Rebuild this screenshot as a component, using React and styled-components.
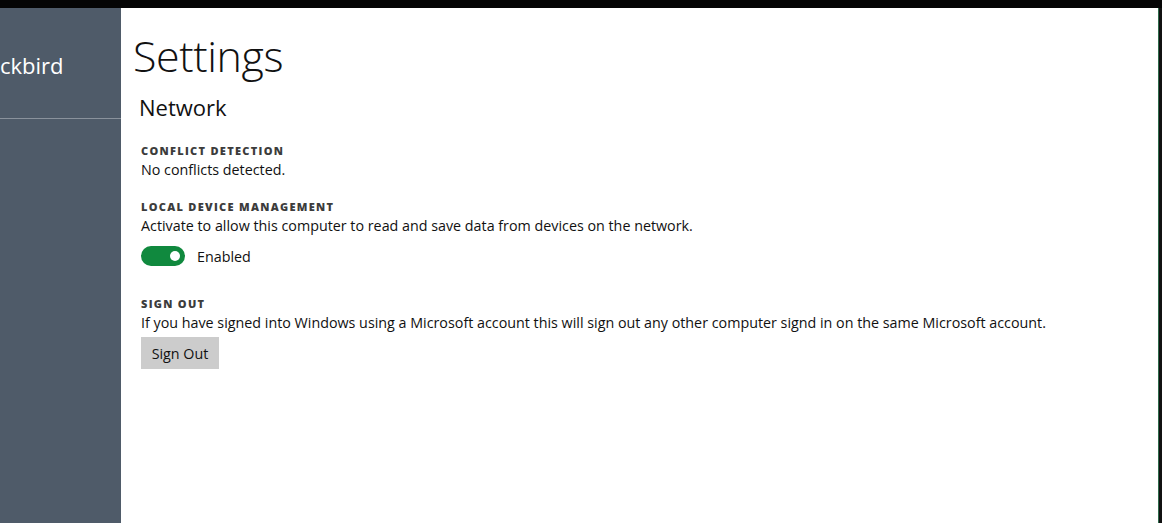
import React from 'react'
import styled, { createGlobalStyle } from 'styled-components'

const GlobalStyle = createGlobalStyle`
  html, body {
    margin: 0;
    padding: 0;
    background: #0a0a0a;
  }
  body {
    font-family: "Open Sans", "Noto Sans", sans-serif;
    color: #111;
  }
`

const Frame = styled.div`
  display: flex;
  flex-direction: column;
  width: 1162px;
  height: 523px;
  overflow: hidden;
`

const TopBar = styled.div`
  height: 8px;
  background: #050505;
`

const Body = styled.div`
  flex: 1;
  display: flex;
`

const Sidebar = styled.aside`
  flex: 0 0 121px;
  background: #4f5b69;
  display: flex;
  flex-direction: column;
`

const AppName = styled.div`
  height: 111px;
  box-sizing: border-box;
  padding-top: 42px;
  font-size: 22px;
  line-height: 30px;
  color: #fff;
  white-space: nowrap;
  border-bottom: 1px solid #8a929c;
`

const Main = styled.main`
  flex: 1;
  background: #fff;
  padding: 22px 0 0 12px;
`

const Edge = styled.div`
  flex: 0 0 3px;
  background: #111;
  border-left: 1px solid #2f6b4c;
`

const Title = styled.h1`
  margin: 0;
  font-weight: 300;
  font-size: 43px;
  line-height: 52px;
  letter-spacing: -0.4px;
`

const Subtitle = styled.h2`
  margin: 10px 0 0 6px;
  font-weight: 400;
  font-size: 22px;
  line-height: 30px;
`

const Sections = styled.div`
  margin: 20px 0 0 8px;
  display: flex;
  flex-direction: column;
  gap: 17px;
`

const Section = styled.section`
  display: flex;
  flex-direction: column;
  margin-top: ${({ $extra }) => $extra || 0}px;
`

const Label = styled.h3`
  margin: 0;
  font-size: 11px;
  line-height: 17px;
  font-weight: 800;
  letter-spacing: 1.3px;
  text-transform: uppercase;
  color: #3c3c3c;
`

const Text = styled.p`
  margin: 0;
  font-size: 14.3px;
  line-height: 22px;
  white-space: nowrap;
`

const ToggleRow = styled.label`
  display: flex;
  align-items: center;
  gap: 12px;
  margin-top: 9px;
  font-size: 14.3px;
`

const Track = styled.span`
  width: 44px;
  height: 20px;
  border-radius: 10px;
  background: #10893e;
  display: flex;
  align-items: center;
  justify-content: ${({ $on }) => ($on ? 'flex-end' : 'flex-start')};
  padding: 0 5px;
  box-sizing: border-box;
`

const Knob = styled.span`
  width: 10px;
  height: 10px;
  border-radius: 50%;
  background: #fff;
`

const Button = styled.button`
  align-self: flex-start;
  margin-top: 3px;
  width: 78px;
  height: 32px;
  border: none;
  background: #cccccc;
  font-family: inherit;
  font-size: 14.3px;
  color: #111;
  padding: 0;
`

const App = () => (
  <>
    <GlobalStyle />
    <Frame>
      <TopBar />
      <Body>
        <Sidebar>
          <AppName>ckbird</AppName>
        </Sidebar>
        <Main>
          <Title>Settings</Title>
          <Subtitle>Network</Subtitle>
          <Sections>
            <Section>
              <Label>Conflict Detection</Label>
              <Text>No conflicts detected.</Text>
            </Section>
            <Section>
              <Label>Local Device Management</Label>
              <Text>Activate to allow this computer to read and save data from devices on the network.</Text>
              <ToggleRow>
                <Track $on>
                  <Knob />
                </Track>
                Enabled
              </ToggleRow>
            </Section>
            <Section $extra={12}>
              <Label>Sign Out</Label>
              <Text>
                If you have signed into Windows using a Microsoft account this will sign out any other computer signd in on the same Microsoft account.
              </Text>
              <Button>Sign Out</Button>
            </Section>
          </Sections>
        </Main>
        <Edge />
      </Body>
    </Frame>
  </>
)

export default App
